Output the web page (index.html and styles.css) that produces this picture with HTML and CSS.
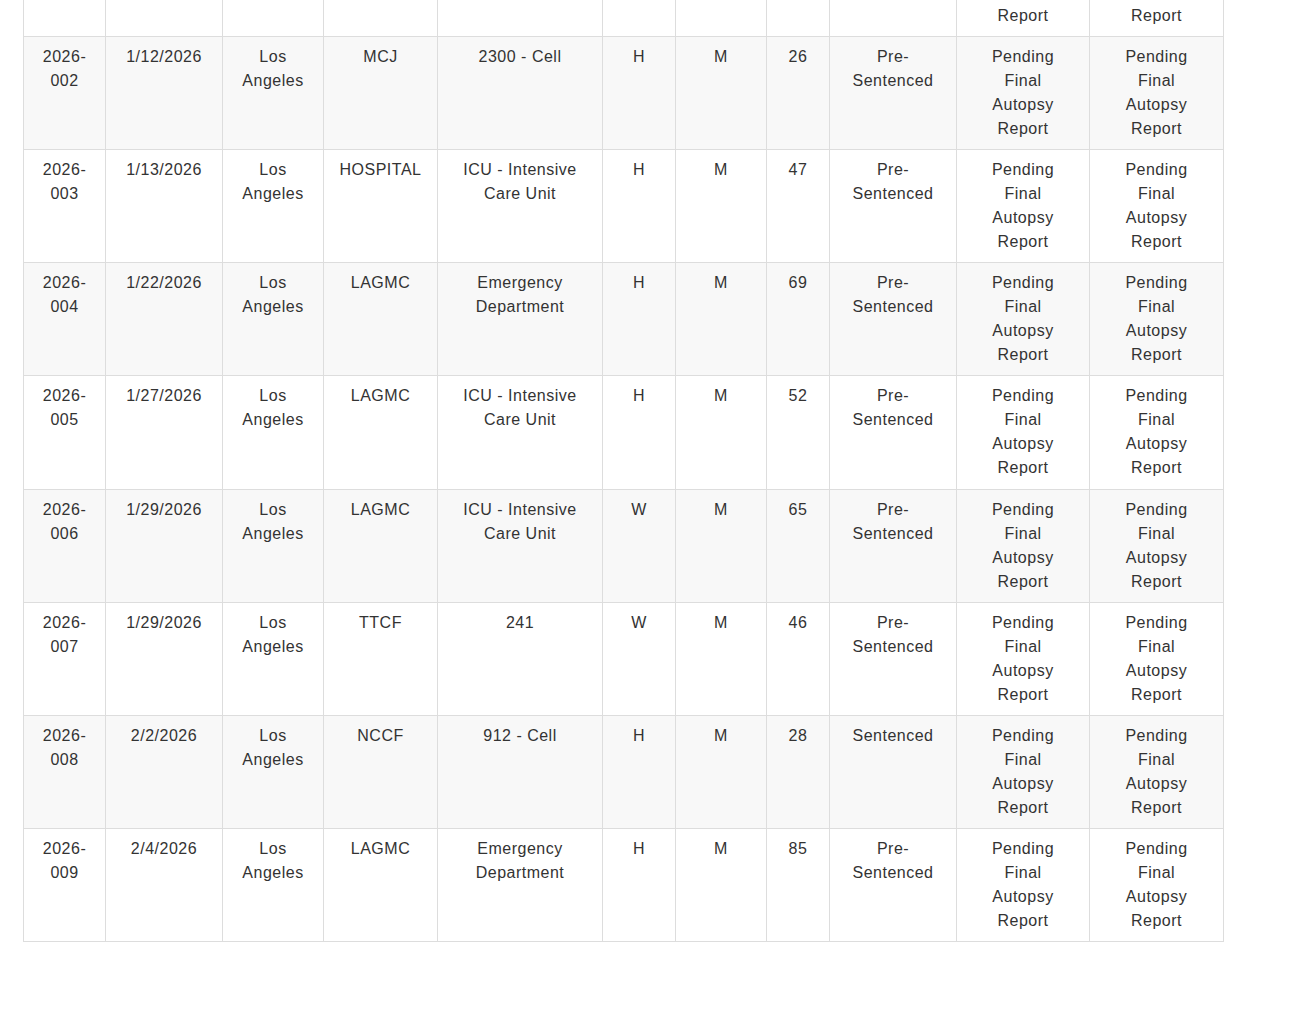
FILE: index.html
```html
<!DOCTYPE html>
<html lang="en">
<head>
<meta charset="utf-8">
<title>In-Custody Deaths</title>
<link rel="stylesheet" href="styles.css">
</head>
<body>
<div class="wrap">
<table class="deaths">
<colgroup>
<col class="c1"><col class="c2"><col class="c3"><col class="c4"><col class="c5"><col class="c6"><col class="c7"><col class="c8"><col class="c9"><col class="c10"><col class="c11">
</colgroup>
<tbody>
<tr><td>2026-001</td><td>1/5/2026</td><td>Los Angeles</td><td>MCJ</td><td>1100 - Cell</td><td>H</td><td>M</td><td>34</td><td>Pre-Sentenced</td><td><span class="stack">Pending Final Autopsy Report</span></td><td><span class="stack">Pending Final Autopsy Report</span></td></tr>
<tr><td>2026-002</td><td>1/12/2026</td><td>Los Angeles</td><td>MCJ</td><td>2300 - Cell</td><td>H</td><td>M</td><td>26</td><td>Pre-Sentenced</td><td><span class="stack">Pending Final Autopsy Report</span></td><td><span class="stack">Pending Final Autopsy Report</span></td></tr>
<tr><td>2026-003</td><td>1/13/2026</td><td>Los Angeles</td><td>HOSPITAL</td><td>ICU - Intensive Care Unit</td><td>H</td><td>M</td><td>47</td><td>Pre-Sentenced</td><td><span class="stack">Pending Final Autopsy Report</span></td><td><span class="stack">Pending Final Autopsy Report</span></td></tr>
<tr><td>2026-004</td><td>1/22/2026</td><td>Los Angeles</td><td>LAGMC</td><td>Emergency Department</td><td>H</td><td>M</td><td>69</td><td>Pre-Sentenced</td><td><span class="stack">Pending Final Autopsy Report</span></td><td><span class="stack">Pending Final Autopsy Report</span></td></tr>
<tr><td>2026-005</td><td>1/27/2026</td><td>Los Angeles</td><td>LAGMC</td><td>ICU - Intensive Care Unit</td><td>H</td><td>M</td><td>52</td><td>Pre-Sentenced</td><td><span class="stack">Pending Final Autopsy Report</span></td><td><span class="stack">Pending Final Autopsy Report</span></td></tr>
<tr><td>2026-006</td><td>1/29/2026</td><td>Los Angeles</td><td>LAGMC</td><td>ICU - Intensive Care Unit</td><td>W</td><td>M</td><td>65</td><td>Pre-Sentenced</td><td><span class="stack">Pending Final Autopsy Report</span></td><td><span class="stack">Pending Final Autopsy Report</span></td></tr>
<tr><td>2026-007</td><td>1/29/2026</td><td>Los Angeles</td><td>TTCF</td><td>241</td><td>W</td><td>M</td><td>46</td><td>Pre-Sentenced</td><td><span class="stack">Pending Final Autopsy Report</span></td><td><span class="stack">Pending Final Autopsy Report</span></td></tr>
<tr><td>2026-008</td><td>2/2/2026</td><td>Los Angeles</td><td>NCCF</td><td>912 - Cell</td><td>H</td><td>M</td><td>28</td><td>Sentenced</td><td><span class="stack">Pending Final Autopsy Report</span></td><td><span class="stack">Pending Final Autopsy Report</span></td></tr>
<tr><td>2026-009</td><td>2/4/2026</td><td>Los Angeles</td><td>LAGMC</td><td>Emergency Department</td><td>H</td><td>M</td><td>85</td><td>Pre-Sentenced</td><td><span class="stack">Pending Final Autopsy Report</span></td><td><span class="stack">Pending Final Autopsy Report</span></td></tr>
</tbody>
</table>
</div>
</body>
</html>
```
FILE: styles.css
```css
html, body {
  margin: 0;
  padding: 0;
  background: #fff;
}
body {
  font-family: "Liberation Sans", Arial, sans-serif;
  font-size: 16px;
  line-height: 24px;
  color: #333;
  letter-spacing: 0.5px;
}
.wrap {
  padding: 0 23px;
  margin-top: -77.14px;
}
.deaths {
  border-collapse: collapse;
  table-layout: fixed;
  width: 1201px;
  border: 1px solid #ddd;
}
.deaths td {
  border: 1px solid #ddd;
  padding: 8px;
  text-align: center;
  vertical-align: top;
  height: 96.14px;
  box-sizing: content-box;
}
.deaths tr:nth-child(even) td {
  background: #f8f8f8;
}
.stack {
  display: inline-block;
  width: min-content;
}
.c1 { width: 82px; }
.c2 { width: 117px; }
.c3 { width: 101px; }
.c4 { width: 114px; }
.c5 { width: 165px; }
.c6 { width: 73px; }
.c7 { width: 91px; }
.c8 { width: 63px; }
.c9 { width: 127px; }
.c10 { width: 133px; }
.c11 { width: 134px; }
```
